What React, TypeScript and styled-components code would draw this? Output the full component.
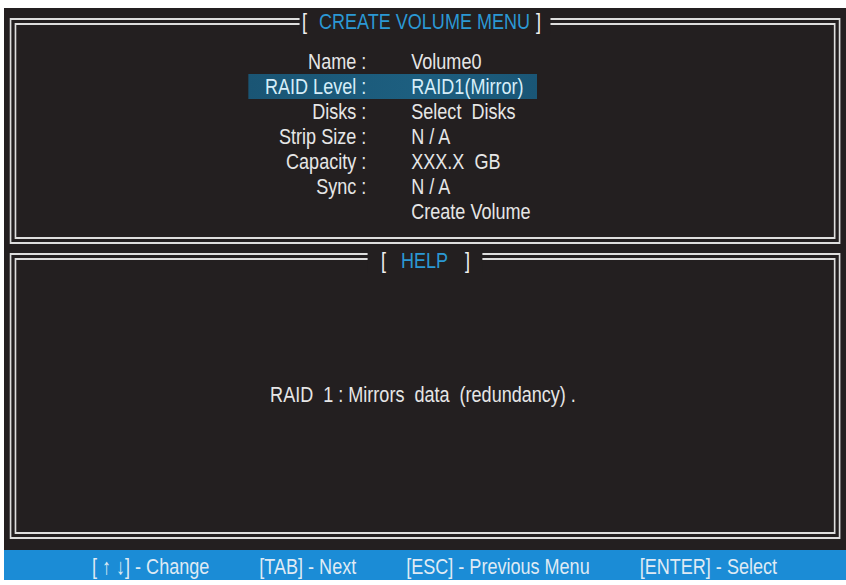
import * as React from 'react';
import styled, { createGlobalStyle } from 'styled-components';

// The BIOS font is a narrow grotesque; Liberation Sans is squeezed to match it.
const SQUEEZE = 0.82;
const h = (n: number) => `${(n / SQUEEZE).toFixed(2)}px`;

const LINE = '#dedede';
const PANEL = '#231f20';

const GlobalStyle = createGlobalStyle`
  html, body {
    margin: 0;
    padding: 0;
    background: #ffffff;
    overflow: hidden;
  }
`;

const Screen = styled.div`
  margin: 8px 0 0 4px;
  width: ${h(842)};
  transform: scaleX(${SQUEEZE});
  transform-origin: 0 0;
  display: flex;
  flex-direction: column;
  font-family: "Liberation Sans", Arial, sans-serif;
  font-size: 22px;
  line-height: 25px;
  color: #e6e6e6;
`;

const Console = styled.div`
  background: ${PANEL};
  padding: 10px ${h(6)} 11px;
  display: flex;
  flex-direction: column;
  gap: 9px;
`;

const Frame = styled.section<{ $height: number }>`
  position: relative;
  box-sizing: border-box;
  height: ${p => p.$height}px;
  border: solid ${LINE};
  border-width: 2px ${h(2)};
  padding: 3px ${h(3)};
`;

const FrameInner = styled.div`
  box-sizing: border-box;
  height: 100%;
  border: solid ${LINE};
  border-width: 2px ${h(2)};
`;

const Legend = styled.div<{ $top: number; $padLeft: number; $padRight: number; $gapLeft: number; $gapRight: number }>`
  position: absolute;
  top: ${p => p.$top}px;
  left: 50%;
  transform: translateX(-50%);
  display: flex;
  background: ${PANEL};
  padding: 0 ${p => h(p.$padRight)} 0 ${p => h(p.$padLeft)};
  white-space: nowrap;

  .open {
    margin-right: ${p => h(p.$gapLeft)};
  }

  .close {
    margin-left: ${p => h(p.$gapRight)};
  }
`;

const Bracket = styled.span`
  color: #f0f0f0;
`;

const LegendText = styled.span`
  color: #2b98d4;
`;

const Menu = styled.div`
  display: flex;
  flex-direction: column;
  padding: 24px 0 0 ${h(232)};
`;

const MenuRow = styled.div<{ $selected?: boolean }>`
  display: grid;
  grid-template-columns: ${h(118)} ${h(126)};
  column-gap: ${h(45)};
  width: ${h(289)};
  height: 25px;
  white-space: pre;
  background: ${p => (p.$selected ? 'linear-gradient(90deg, #1a5574, #1d5f80 60%, #1a5676)' : 'transparent')};
  color: ${p => (p.$selected ? '#d6eef9' : '#e6e6e6')};
`;

const Label = styled.span`
  text-align: right;
`;

const Value = styled.span`
  text-align: left;
`;

const HelpBody = styled.div`
  height: 100%;
  box-sizing: border-box;
  display: flex;
  align-items: center;
  justify-content: center;
  padding: 0 ${h(4)} 3px 0;
  white-space: pre;
`;

const KeyBar = styled.div`
  height: 30px;
  background: #1b8cd6;
  display: flex;
  align-items: center;
  gap: ${h(50)};
  padding: 3px 0 0 ${h(88)};
  box-sizing: border-box;
  color: #dfeaf4;
  white-space: pre;
`;

const rows = [
  { label: 'Name :', value: 'Volume0' },
  { label: 'RAID Level :', value: 'RAID1(Mirror)', selected: true },
  { label: 'Disks :', value: 'Select  Disks' },
  { label: 'Strip Size :', value: 'N / A' },
  { label: 'Capacity :', value: 'XXX.X  GB' },
  { label: 'Sync :', value: 'N / A' },
  { label: '', value: 'Create Volume' },
];

const keys = ['[ \u2191 \u2193] - Change', '[TAB] - Next', '[ESC] - Previous Menu', '[ENTER] - Select'];

export default function App() {
  return (
    <>
      <GlobalStyle />
      <Screen>
        <Console>
          <Frame $height={226}>
            <Legend $top={-11} $padLeft={2} $padRight={9} $gapLeft={12} $gapRight={6}>
              <Bracket className="open">[</Bracket>
              <LegendText>CREATE VOLUME MENU</LegendText>
              <Bracket className="close">]</Bracket>
            </Legend>
            <FrameInner>
              <Menu>
                {rows.map((row, i) => (
                  <MenuRow key={i} $selected={row.selected}>
                    <Label>{row.label}</Label>
                    <Value>{row.value}</Value>
                  </MenuRow>
                ))}
              </Menu>
            </FrameInner>
          </Frame>
          <Frame $height={286}>
            <Legend $top={-7} $padLeft={13} $padRight={12} $gapLeft={15} $gapRight={17}>
              <Bracket className="open">[</Bracket>
              <LegendText>HELP</LegendText>
              <Bracket className="close">]</Bracket>
            </Legend>
            <FrameInner>
              <HelpBody>RAID  1 : Mirrors  data  (redundancy) .</HelpBody>
            </FrameInner>
          </Frame>
        </Console>
        <KeyBar>
          {keys.map(k => (
            <span key={k}>{k}</span>
          ))}
        </KeyBar>
      </Screen>
    </>
  );
}
